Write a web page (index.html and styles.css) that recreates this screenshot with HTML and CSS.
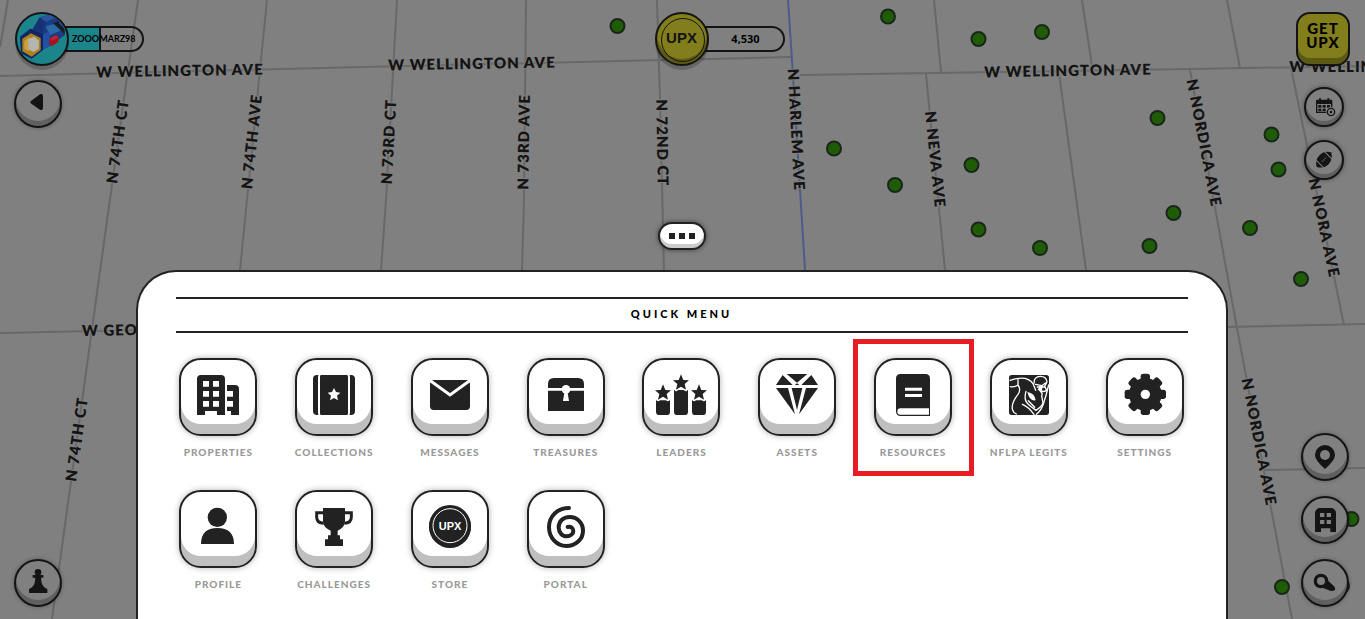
FILE: index.html
```
<!DOCTYPE html>
<html lang="en">
<head>
<meta charset="UTF-8">
<meta name="viewport" content="width=device-width, initial-scale=1.0">
<title>Quick Menu</title>
<link rel="stylesheet" href="styles.css">
</head>
<body>

<!-- street map -->
<svg class="map" viewBox="0 0 1365 619" preserveAspectRatio="xMidYMid slice" aria-hidden="true">
  <g class="roads">
    <path d="M0 76L280 69L620 61L791 57M800 75L1190 69L1365 66"/>
    <path d="M8 0L0 47M138 0L128 70L96 300L52 619M267 0L247 200L240 270M397 0L386 200L381 270"/>
    <path d="M526 0L524 200L522 270M657 0L660 100L664 270M934 0L941 72M1082 0L1092 66M926 74L945 270M1059 73L1086 270"/>
    <path d="M1190 70L1230 290L1243 360L1292 619M1227 0L1240 68M1291 68L1344 325M1228 327L1365 324M1264 470L1365 468M0 333L140 330"/>
    <path class="highway" d="M788 0L792 60L805 270"/>
  </g>
  <g class="streets">
    <text transform="translate(180 76) rotate(-1)">W WELLINGTON AVE</text>
    <text transform="translate(472 69) rotate(-1)">W WELLINGTON AVE</text>
    <text transform="translate(1068 76) rotate(-1)">W WELLINGTON AVE</text>
    <text transform="translate(1373 72)">W WELLINGTON AVE</text>
    <text transform="translate(123 142) rotate(-82)">N 74TH CT</text>
    <text transform="translate(257 142) rotate(-84)">N 74TH AVE</text>
    <text transform="translate(394 142) rotate(-87)">N 73RD CT</text>
    <text transform="translate(529 142) rotate(-89)">N 73RD AVE</text>
    <text transform="translate(657 143) rotate(89)">N 72ND CT</text>
    <text transform="translate(791 130) rotate(87)">N HARLEM AVE</text>
    <text transform="translate(930 160) rotate(84)">N NEVA AVE</text>
    <text transform="translate(1199 144) rotate(79)">N NORDICA AVE</text>
    <text transform="translate(1319 229) rotate(78)">N NORA AVE</text>
    <text transform="translate(82 440) rotate(-82)">N 74TH CT</text>
    <text transform="translate(1254 443) rotate(79)">N NORDICA AVE</text>
    <text class="from-start" transform="translate(82 336) rotate(-1)">W GEORGE ST</text>
  </g>
  <g class="pins">
    <circle cx="617.5" cy="26" r="7"/><circle cx="888" cy="16.5" r="7"/><circle cx="978.5" cy="39" r="7"/>
    <circle cx="1042" cy="32" r="7"/><circle cx="1157.5" cy="118" r="7"/><circle cx="1271.5" cy="134.5" r="7"/>
    <circle cx="1278.5" cy="169.5" r="7"/><circle cx="834" cy="148.5" r="7"/><circle cx="971.5" cy="165" r="7"/>
    <circle cx="895" cy="185" r="7"/><circle cx="1173.5" cy="213" r="7"/><circle cx="978.5" cy="229.5" r="7"/>
    <circle cx="1040" cy="248" r="7"/><circle cx="1149.5" cy="246" r="7"/><circle cx="1250" cy="228" r="7"/>
    <circle cx="1301" cy="279" r="7"/><circle cx="1351.5" cy="519" r="7"/><circle cx="1282" cy="587" r="7"/>
    <circle cx="1342" cy="586" r="7"/>
  </g>
</svg>

<div class="game">

  <aside class="side side-left">
    <div class="profile">
      <button class="avatar" aria-label="Profile">
        <svg viewBox="0 0 150 150">
          <path fill="#1b3c85" d="M47 46L68 10L104 0L138 27L143 64L98 96L76 108L38 44z"/>
          <path fill="#2c549c" d="M68 10L104 0L120 10L86 24z"/>
          <path fill="#173274" d="M47 46L68 10L86 24L76 58z"/>
          <path fill="#2a6aa8" d="M86 36L130 26L141 46L98 64z"/>
          <path fill="#1a1d26" d="M108 28L122 22L143 46L143 62L134 52z"/>
          <path fill="#0f2568" d="M9 68L40 44L78 60L78 108L44 134L12 118z"/>
          <path fill="#2450a4" d="M78 60L98 52L98 96L78 108z"/>
          <path fill="#b0801a" d="M16 74L42 58L71 72L71 108L44 128L16 112z"/>
          <path fill="#c8a440" d="M22 82L36 70L36 112L22 106z"/>
          <path fill="#b4b5ae" d="M34 74L52 68L66 80L65 104L50 114L34 106z"/>
          <path fill="#a01420" d="M97 74L116 64L125 70L124 84L106 96L97 92z"/>
          <path fill="#c42030" d="M97 74L116 64L125 70L106 80z"/>
        </svg>
      </button>
      <div class="pill name-pill">ZOOOMARZ98</div>
    </div>
    <button class="round" aria-label="Back">
      <svg viewBox="0 0 132 132"><path d="M46 56L72 37Q81 34 81 43V78Q81 87 72 83L46 65Q40 60 46 56z"/></svg>
    </button>
    <button class="round push-down" aria-label="Play">
      <svg viewBox="0 0 132 132"><circle cx="66" cy="34" r="10"/><path d="M50 42H82V50H75Q75 66 82 76Q88 83 94 84V96H39V84Q45 83 51 76Q58 66 58 50H50z"/></svg>
    </button>
  </aside>

  <main class="center">
    <div class="wallet">
      <div class="coin">UPX</div>
      <div class="pill balance">4,530</div>
    </div>

    <button class="more" aria-label="Close menu"><i></i><i></i><i></i></button>

    <section class="sheet">
      <h1>QUICK MENU</h1>
      <ul class="menu">
        <li>
          <button class="tile" aria-labelledby="l-properties">
            <svg viewBox="0 0 222 222">
              <path d="M60 45H120Q132 45 132 57V165H108V153H72V165H48V57Q48 45 60 45z"/>
              <path d="M138 75H162Q174 75 174 87V165H150V153H138V140H156V123H138V110H156V93H138z"/>
              <path class="cut" d="M66 63h18v17h-18zM96 63h18v17h-18zM66 93h18v17h-18zM96 93h18v17h-18zM66 123h18v17h-18zM96 123h18v17h-18z"/>
            </svg>
          </button>
          <span id="l-properties">PROPERTIES</span>
        </li>
        <li>
          <button class="tile" aria-labelledby="l-collections">
            <svg viewBox="0 0 222 222">
              <rect x="48" y="45" width="60" height="120" rx="12"/>
              <rect x="114" y="45" width="60" height="120" rx="12"/>
              <rect x="66" y="38" width="90" height="134" rx="14" fill="none" stroke="#fff" stroke-width="6"/>
              <rect x="69" y="45" width="84" height="120" rx="12"/>
              <path class="cut" d="M111 84L117 96L130 98L120 107L123 121L111 114L99 121L102 107L92 98L105 96z"/>
            </svg>
          </button>
          <span id="l-collections">COLLECTIONS</span>
        </li>
        <li>
          <button class="tile" aria-labelledby="l-messages">
            <svg viewBox="0 0 222 222">
              <rect x="51" y="60" width="120" height="90" rx="11"/>
              <path d="M48 59L111 105L174 59" fill="none" stroke="#fff" stroke-width="9"/>
            </svg>
          </button>
          <span id="l-messages">MESSAGES</span>
        </li>
        <li>
          <button class="tile" aria-labelledby="l-treasures">
            <svg viewBox="0 0 222 222">
              <path d="M57 84V72Q57 54 75 54H147Q165 54 165 72V84zM57 92H165V153H57z"/>
              <circle class="cut" cx="111" cy="88" r="13"/>
              <path class="cut" d="M107 92H115L120 123H102z"/>
            </svg>
          </button>
          <span id="l-treasures">TREASURES</span>
        </li>
        <li>
          <button class="tile" aria-labelledby="l-leaders">
            <svg viewBox="0 0 222 222">
              <path d="M36 121H78V155Q78 165 68 165H46Q36 165 36 155zM90 90H132V155Q132 165 122 165H100Q90 165 90 155zM144 121H186V155Q186 165 176 165H154Q144 165 144 155z"/>
              <g stroke="#fff" stroke-width="9" paint-order="stroke" stroke-linejoin="round">
                <path transform="translate(57 98)" d="M0 -25L7 -8L24 -7L11 4L15 21L0 12L-15 21L-11 4L-24 -7L-7 -8z"/>
                <path transform="translate(111 68)" d="M0 -25L7 -8L24 -7L11 4L15 21L0 12L-15 21L-11 4L-24 -7L-7 -8z"/>
                <path transform="translate(165 98)" d="M0 -25L7 -8L24 -7L11 4L15 21L0 12L-15 21L-11 4L-24 -7L-7 -8z"/>
              </g>
            </svg>
          </button>
          <span id="l-leaders">LEADERS</span>
        </li>
        <li>
          <button class="tile" aria-labelledby="l-assets">
            <svg viewBox="0 0 222 222">
              <path d="M80 42H142L111 68zM48 75L68 45L98 75zM174 75L154 45L124 75zM104 75L111 70L118 75z"/>
              <path d="M48 84H84L105 163zM95 84H127L111 150zM174 84H138L117 163z"/>
            </svg>
          </button>
          <span id="l-assets">ASSETS</span>
        </li>
        <li class="highlight">
          <button class="tile" aria-labelledby="l-resources">
            <svg viewBox="0 0 222 222">
              <path d="M74 42H148Q162 42 162 56V168H74Q60 168 60 154V56Q60 42 74 42z"/>
              <path class="cut" d="M87 83h51v9h-51zM87 102h51v9h-51zM159 145V164H73Q64 164 64 155Q64 145 73 145z"/>
            </svg>
          </button>
          <span id="l-resources">RESOURCES</span>
        </li>
        <li>
          <button class="tile" aria-labelledby="l-legits">
            <svg viewBox="0 0 222 222">
              <rect x="51" y="45" width="120" height="120" rx="8"/>
              <g fill="none" stroke="#fff" stroke-width="4" stroke-linecap="round" stroke-linejoin="round">
                <path d="M54 61Q80 52 99 55Q121 61 126 78L131 91M78 58V75Q68 83 55 80M78 75Q88 89 78 103Q58 128 61 147Q63 158 73 162"/>
                <path d="M102 94Q94 119 108 132Q116 140 132 151Q151 139 153 128L149 108Q153 99 145 94M91 133Q109 140 126 163M109 122L128 142"/>
                <path d="M126 70Q126 49 145 49Q163 49 165 66L158 79L164 91Q151 99 139 88M130 73L150 77L160 69M136 81H156"/>
                <path d="M170 75Q163 105 155 129Q148 152 133 163"/>
              </g>
              <path class="cut" d="M106 96Q128 99 131 121Q113 125 106 96zM142 79L153 77L148 97L138 88z"/>
            </svg>
          </button>
          <span id="l-legits">NFLPA LEGITS</span>
        </li>
        <li>
          <button class="tile" aria-labelledby="l-settings">
            <svg viewBox="0 0 222 222">
              <g transform="translate(112 103)">
                <circle r="49"/>
                <rect x="-14" y="-62" width="28" height="124" rx="8"/>
                <rect x="-14" y="-62" width="28" height="124" rx="8" transform="rotate(45)"/>
                <rect x="-14" y="-62" width="28" height="124" rx="8" transform="rotate(90)"/>
                <rect x="-14" y="-62" width="28" height="124" rx="8" transform="rotate(135)"/>
                <circle class="cut" r="14"/>
              </g>
            </svg>
          </button>
          <span id="l-settings">SETTINGS</span>
        </li>
        <li>
          <button class="tile" aria-labelledby="l-profile">
            <svg viewBox="0 0 222 222"><circle cx="109" cy="76" r="29"/><path d="M60 156Q60 108 109 108Q159 108 159 156z"/></svg>
          </button>
          <span id="l-profile">PROFILE</span>
        </li>
        <li>
          <button class="tile" aria-labelledby="l-challenges">
            <svg viewBox="0 0 222 222">
              <path d="M78 48H144V88Q144 106 122 116V130H129V142H138V162H84V142H93V130H101V116Q78 106 78 88z"/>
              <path d="M80 62H59V76Q59 93 80 94M142 62H163V76Q163 93 142 94" fill="none" stroke="#222" stroke-width="9"/>
            </svg>
          </button>
          <span id="l-challenges">CHALLENGES</span>
        </li>
        <li>
          <button class="tile" aria-labelledby="l-store">
            <svg viewBox="0 0 222 222">
              <circle cx="111" cy="102" r="63"/><circle cx="111" cy="105" r="63"/>
              <circle cx="111" cy="101" r="51" fill="none" stroke="#fff" stroke-width="3"/>
              <text class="store-coin" x="111" y="113">UPX</text>
            </svg>
          </button>
          <span id="l-store">STORE</span>
        </li>
        <li>
          <button class="tile" aria-labelledby="l-portal">
            <svg viewBox="0 0 222 222">
              <path d="M120 48C84 48 60 74 60 106C60 138 84 162 112 162C140 162 162 142 162 116C162 92 144 75 122 75C102 75 89 89 89 106C89 122 100 133 113 133C124 133 133 126 133 117C133 109 127 103 116 105" fill="none" stroke="#222" stroke-width="12" stroke-linecap="round"/>
            </svg>
          </button>
          <span id="l-portal">PORTAL</span>
        </li>
      </ul>
    </section>
  </main>

  <aside class="side side-right">
    <button class="get-upx">GET<br>UPX</button>
    <button class="round small" aria-label="Events">
      <svg viewBox="0 0 108 108">
        <path d="M33 32H39V28H45V32H64V28H70V32H76Q79 32 79 35V72H30V35Q30 32 33 32z"/>
        <path class="dim" d="M34 45H75V68H34z"/>
        <path d="M37 48h9v8h-9zM50 48h9v8h-9zM63 48h9v8h-9zM37 59h9v7h-9zM50 59h9v7h-9z"/>
        <circle class="dim" cx="75" cy="69" r="15"/><circle cx="75" cy="69" r="13"/><circle class="dim" cx="75" cy="69" r="9"/><circle cx="75" cy="69" r="4"/>
      </svg>
    </button>
    <button class="round small" aria-label="Football">
      <svg viewBox="0 0 108 108">
        <g transform="translate(54 53) rotate(-45)">
          <path d="M-31 0Q-20 -19 0 -19Q20 -19 31 0Q20 19 0 19Q-20 19 -31 0z"/>
          <path d="M-18 -20V20M18 -20V20" class="dim-line"/>
          <path d="M-10 0H10M-6 -4V4M0 -4V4M6 -4V4" class="lace"/>
        </g>
      </svg>
    </button>
    <button class="round push-down" aria-label="Locate">
      <svg viewBox="0 0 132 132"><path d="M66 102Q36 76 36 60A30 30 0 0 1 96 60Q96 76 66 102z"/><circle class="dim" cx="66" cy="60" r="15"/></svg>
    </button>
    <button class="round" aria-label="Buildings">
      <svg viewBox="0 0 132 132"><path d="M47 30H88Q99 36 99 44V102H82V91H54V102H36V44Q36 36 47 30z"/><path class="dim" d="M51 45h13v12h-13zM71 45h13v12h-13zM51 66h13v12h-13zM71 66h13v12h-13z"/></svg>
    </button>
    <button class="round" aria-label="Search">
      <svg viewBox="0 0 132 132"><path d="M70 54L93 76Q99 84 95 88Q86 92 76 87L58 80z"/><circle cx="54" cy="60" r="22"/><circle class="dim" cx="54" cy="60" r="12"/></svg>
    </button>
  </aside>

</div>

</body>
</html>
```
FILE: styles.css
```
:root {
  --ink:#222; --dark:#141414; --dim:#808080; --dim-shade:#606060; --yellow:#827e1b;
}
*{box-sizing:border-box}
body{margin:0;background:var(--dim);font-family:Lato,"Open Sans",sans-serif;color:#000}
button{font-family:inherit;padding:0;cursor:pointer}
svg{display:block}

/* map */
.map{position:absolute;top:0;left:0;width:100%;height:100%}
.roads path{fill:none;stroke:#686868;stroke-width:2}
.roads .highway{stroke:#4d5b8b}
.streets text{font-size:15px;font-weight:800;letter-spacing:1px;text-anchor:middle;fill:#141414;stroke:var(--dim);stroke-width:2px;paint-order:stroke}
.streets .from-start{text-anchor:start}
.pins circle{fill:#1f5c06;stroke:#1b261b;stroke-width:2}

/* layout */
.game{position:relative;display:grid;grid-template-columns:calc(10% - 1px) 80% 1fr;min-height:100vh;overflow:hidden}
.side{display:flex;flex-direction:column;padding:12px 14px}
.side-right{align-items:flex-end;gap:13px;padding-right:16px}
.center{display:flex;flex-direction:column;align-items:center;padding-top:12px}
.push-down{margin-top:auto}

/* hud */
.profile,.wallet{position:relative;z-index:1;display:flex;align-items:center;width:54px}
.profile{margin-left:1px;margin-bottom:14px}
.avatar,.coin{position:relative;z-index:1;flex:none;width:54px;height:54px;border:2px solid var(--dark);border-radius:50%;box-shadow:0 4px 0 rgba(0,0,0,.2)}
.avatar{background:#1c848b;overflow:hidden}
.pill{flex:none;height:26px;margin-left:-8px;border:2px solid var(--dark);border-left:0;border-radius:0 13px 13px 0;line-height:22px;font-size:11px;font-weight:700}
.name-pill{width:83px;padding-left:11px;font-size:10px;font-weight:700;font-size:9px;letter-spacing:0;white-space:nowrap;background:linear-gradient(90deg,#1c848b 38px,var(--dark) 38px,var(--dark) 40px,transparent 40px)}
.coin{background:var(--yellow);box-shadow:inset 0 -5px 0 #5c5913,0 4px 0 rgba(0,0,0,.2);text-align:center;font:700 15px/48px "Liberation Sans",sans-serif;color:var(--dark)}
.coin::before{content:"";position:absolute;top:4px;left:4px;width:42px;height:42px;border:1px solid var(--dark);border-radius:50%}
.balance{width:84px;padding-left:8px;text-align:center;font-family:"Open Sans",sans-serif}
.get-upx{width:54px;height:54px;margin-bottom:8px;padding-bottom:8px;border:2px solid var(--dark);border-radius:14px;background:var(--yellow);box-shadow:inset 0 -6px 0 #5c5913;font-size:15px;font-weight:900;line-height:14px;letter-spacing:1px}
.side-right .get-upx{margin-right:-1px}
.round{flex:none;width:48px;height:48px;border:2px solid var(--dark);border-radius:50%;background:var(--dim);box-shadow:inset 0 -5px 0 var(--dim-shade),0 0 4px rgba(0,0,0,.3)}
.round svg{fill:var(--dark)}
.round.small{width:40px;height:40px;margin-right:5px;box-shadow:inset 0 -4px 0 var(--dim-shade),0 0 5px rgba(0,0,0,.4)}
.side-right .round + .round:not(.small):not(.push-down){margin-top:2px}
.round .dim{fill:var(--dim)}
.dim-line{stroke:var(--dim);stroke-width:3}
.lace{stroke:#555;stroke-width:2}
.more{display:flex;flex:none;align-items:center;justify-content:center;gap:4px;width:48px;height:28px;margin-top:auto;margin-bottom:20px;border:2px solid var(--ink);border-radius:14px;background:#fff;box-shadow:inset 0 -4px 0 #ccc,0 0 5px rgba(0,0,0,.5)}
.more i{width:6px;height:6px;background:var(--ink)}

/* quick menu sheet */
.sheet{width:100%;padding:25px 23px;border:2px solid var(--ink);border-bottom:0;border-radius:40px 40px 0 0;background:#fff}
h1{margin:0 15px 25px;padding-bottom:2px;border:solid var(--ink);border-width:2px 0;text-align:center;font-size:11px;font-weight:900;line-height:30px;letter-spacing:3px}
.menu{display:grid;grid-template-columns:repeat(9,1fr);row-gap:28px;margin:0;padding:0;list-style:none}
.menu li{position:relative;display:flex;flex-direction:column;align-items:center;gap:8px}
.menu span{padding-bottom:2px;font-size:10px;font-weight:900;line-height:16px;letter-spacing:1px;white-space:nowrap;color:#999}
.tile{width:78px;height:78px;border:2px solid var(--ink);border-radius:22px;background:#fff;box-shadow:inset 0 -10px 0 #bfbfbf,0 0 6px rgba(0,0,0,.3)}
.tile svg{fill:var(--ink)}
.tile .cut{fill:#fff}
.store-coin{font:700 33px "Liberation Sans",sans-serif;text-anchor:middle;fill:#fff}
.highlight::after{content:"";position:absolute;top:-19px;right:-3px;bottom:-14px;left:-2px;border:5px solid #e81c24;pointer-events:none}
```
